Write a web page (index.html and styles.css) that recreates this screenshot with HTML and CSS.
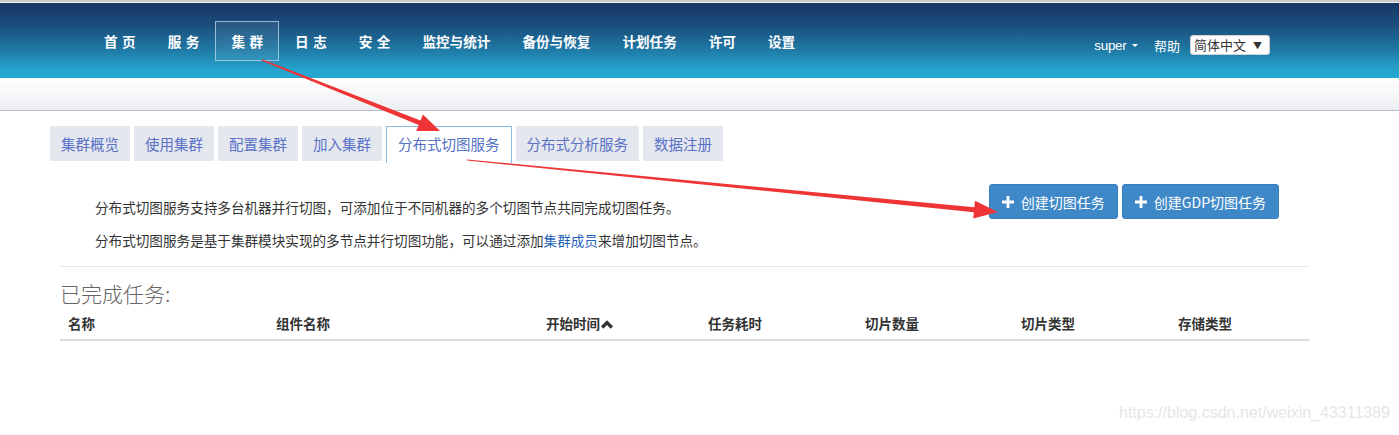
FILE: index.html
```html
<!DOCTYPE html>
<html lang="zh-CN">
<head>
<meta charset="utf-8">
<title>分布式切图服务</title>
<link rel="stylesheet" href="styles.css">
</head>
<body>
<div class="page">
  <header class="header">
    <nav class="nav">
      <a class="nav-item spaced">首 页</a>
      <a class="nav-item spaced">服 务</a>
      <a class="nav-item spaced active">集 群</a>
      <a class="nav-item spaced">日 志</a>
      <a class="nav-item spaced">安 全</a>
      <a class="nav-item">监控与统计</a>
      <a class="nav-item">备份与恢复</a>
      <a class="nav-item">计划任务</a>
      <a class="nav-item">许可</a>
      <a class="nav-item">设置</a>
    </nav>
    <div class="user">
      <span class="user-name">super <span class="caret"></span></span>
      <span class="help">帮助</span>
      <span class="lang">简体中文 <span class="lang-arrow">▼</span></span>
    </div>
  </header>
  <div class="subbar"></div>

  <ul class="tabs">
    <li class="tab">集群概览</li>
    <li class="tab">使用集群</li>
    <li class="tab">配置集群</li>
    <li class="tab">加入集群</li>
    <li class="tab active">分布式切图服务</li>
    <li class="tab">分布式分析服务</li>
    <li class="tab">数据注册</li>
  </ul>

  <section class="intro">
    <div class="intro-text">
      <p>分布式切图服务支持多台机器并行切图，可添加位于不同机器的多个切图节点共同完成切图任务。</p>
      <p>分布式切图服务是基于集群模块实现的多节点并行切图功能，可以通过添加<a class="link">集群成员</a>来增加切图节点。</p>
    </div>
    <div class="actions">
      <button class="btn"><svg class="plus" viewBox="0 0 12 12" width="12" height="12"><path d="M4.6 0h2.8v4.6H12v2.8H7.4V12H4.6V7.4H0V4.6h4.6z" fill="#fff"/></svg>创建切图任务</button>
      <button class="btn"><svg class="plus" viewBox="0 0 12 12" width="12" height="12"><path d="M4.6 0h2.8v4.6H12v2.8H7.4V12H4.6V7.4H0V4.6h4.6z" fill="#fff"/></svg>创建GDP切图任务</button>
    </div>
  </section>

  <hr class="divider">

  <h3 class="section-title">已完成任务:</h3>
  <table class="grid">
    <thead>
      <tr>
        <th class="c1">名称</th>
        <th class="c2">组件名称</th>
        <th class="c3">开始时间<svg class="sort" viewBox="0 0 12 9" width="12" height="9"><path d="M0 6.3L6 0.3l6 6-2.4 2.4L6 5.1 2.4 8.7z" fill="#333"/></svg></th>
        <th class="c4">任务耗时</th>
        <th class="c5">切片数量</th>
        <th class="c6">切片类型</th>
        <th class="c7">存储类型</th>
      </tr>
    </thead>
  </table>

  <svg class="arrows" width="1399" height="435" viewBox="0 0 1399 435">
    <polygon fill="#ee3434" points="262.2,59.3 420.5,120.4 423,114.4 440,131 416.2,131.1 418.7,125.1 261.8,60.7"/>
    <polygon fill="#ee3434" points="467.05,159.4 974.3,207.2 975,200.7 998,212 973.2,218.6 973.9,212.15 466.95,160.6"/>
  </svg>
  <div class="watermark">https://blog.csdn.net/weixin_43311389</div>
</div>
</body>
</html>
```

FILE: styles.css
```css
* { box-sizing: border-box; }
html, body { margin: 0; padding: 0; background: #fff; }
body {
  font-family: "Noto Sans CJK SC", "Liberation Sans", sans-serif;
  color: #333;
}
.page {
  position: relative;
  width: 1399px;
  height: 435px;
  overflow: hidden;
}

/* header */
.header {
  height: 78px;
  border-top: 2px solid #c9c9c9;
  box-shadow: inset 0 1px 0 #f4f4f4;
  background: linear-gradient(to bottom, #183666 0%, #1b4d7c 30%, #1f78a4 62%, #23a2cc 88%, #25aad3 100%);
  display: flex;
  align-items: flex-start;
  justify-content: space-between;
  padding: 0 129px 0 88px;
}
.nav {
  display: flex;
  margin-top: 19px;
}
.nav-item {
  display: block;
  height: 40px;
  line-height: 38px;
  padding: 0 15px;
  border: 1px solid transparent;
  color: #fff;
  font-size: 13.6px;
  font-weight: bold;
  white-space: pre;
}
.nav-item.spaced { word-spacing: 1.4px; }
.nav-item.active {
  background: rgba(255, 255, 255, 0.07);
  border-color: rgba(190, 215, 235, 0.75);
}
.user {
  display: flex;
  align-items: center;
  margin-top: 33px;
  color: #fff;
  font-size: 13px;
}
.user-name {
  font-family: "Liberation Sans", sans-serif;
  font-size: 13.5px;
  letter-spacing: -0.3px;
}
.caret {
  display: inline-block;
  width: 0;
  height: 0;
  margin-left: 2px;
  vertical-align: middle;
  border-top: 3px solid #fff;
  border-left: 3px solid transparent;
  border-right: 3px solid transparent;
}
.help { margin-left: 16px; }
.lang {
  margin-left: 10px;
  width: 80px;
  height: 20px;
  line-height: 18px;
  background: #fff;
  border: 1px solid #d0d0d0;
  border-radius: 3px;
  color: #333;
  font-size: 13px;
  padding-left: 3px;
}
.lang-arrow { font-size: 9px; margin-left: 4px; color: #333; vertical-align: 1px; }

.subbar {
  height: 33px;
  background: linear-gradient(to bottom, #ffffff 0%, #f4f5f7 60%, #eceef2 100%);
  border-bottom: 1px solid #b8bcc7;
}

/* tabs */
.tabs {
  list-style: none;
  margin: 15px 0 0 50px;
  padding: 0;
  display: flex;
  gap: 4px;
  height: 35px;
}
.tab {
  height: 35px;
  line-height: 35px;
  padding: 0 11px;
  background: #e4e7ee;
  color: #5a72c6;
  font-size: 14.5px;
}
.tab.active {
  background: #fff;
  border: 1px solid #8cbbe6;
  border-bottom: none;
  height: 37px;
  line-height: 34px;
  color: #5270c4;
}

/* intro */
.intro {
  display: flex;
  justify-content: space-between;
  align-items: flex-start;
  margin: 0 120px 0 95px;
  height: 105px;
}
.intro-text { padding-top: 37px; }
.intro-text p {
  margin: 0 0 15px;
  font-size: 13.6px;
  line-height: 18px;
  color: #333;
}
.link { color: #1f63b8; }
.actions {
  display: flex;
  gap: 4px;
  margin-top: 23px;
}
.btn {
  display: flex;
  align-items: center;
  height: 35px;
  padding: 0 12px;
  background: #3f88c8;
  border: 1px solid #3a7fbd;
  border-radius: 3px;
  color: #fff;
  font-family: "Noto Sans CJK SC", "Liberation Sans", sans-serif;
  font-size: 14px;
}
.plus { margin-right: 7px; }

.divider {
  margin: 0 89px 0 60px;
  border: 0;
  border-top: 1px solid #e8e8e8;
}

.section-title {
  margin: 12px 0 0 60px;
  font-size: 21px;
  font-weight: 300;
  color: #666;
  line-height: 28px;
}

.grid {
  margin: 3px 0 0 60px;
  width: 1250px;
  border-collapse: collapse;
  table-layout: fixed;
}
.grid th {
  text-align: left;
  font-size: 13.5px;
  font-weight: bold;
  color: #333;
  padding: 4px 8px 7px;
  line-height: 18px;
  border-bottom: 2px solid #dddddd;
}
.c1 { width: 208px; }
.c2 { width: 270px; }
.c3 { width: 162px; }
.c4 { width: 157px; }
.c5 { width: 156px; }
.c6 { width: 157px; }
.c7 { width: 140px; }
.sort { margin-left: 1px; vertical-align: 0; }

/* annotation overlay */
.arrows {
  position: absolute;
  left: 0;
  top: 0;
  pointer-events: none;
}
.watermark {
  position: absolute;
  right: 9px;
  top: 404px;
  font-family: "Liberation Sans", sans-serif;
  font-size: 16px;
  color: #e6e6e6;
}
```
